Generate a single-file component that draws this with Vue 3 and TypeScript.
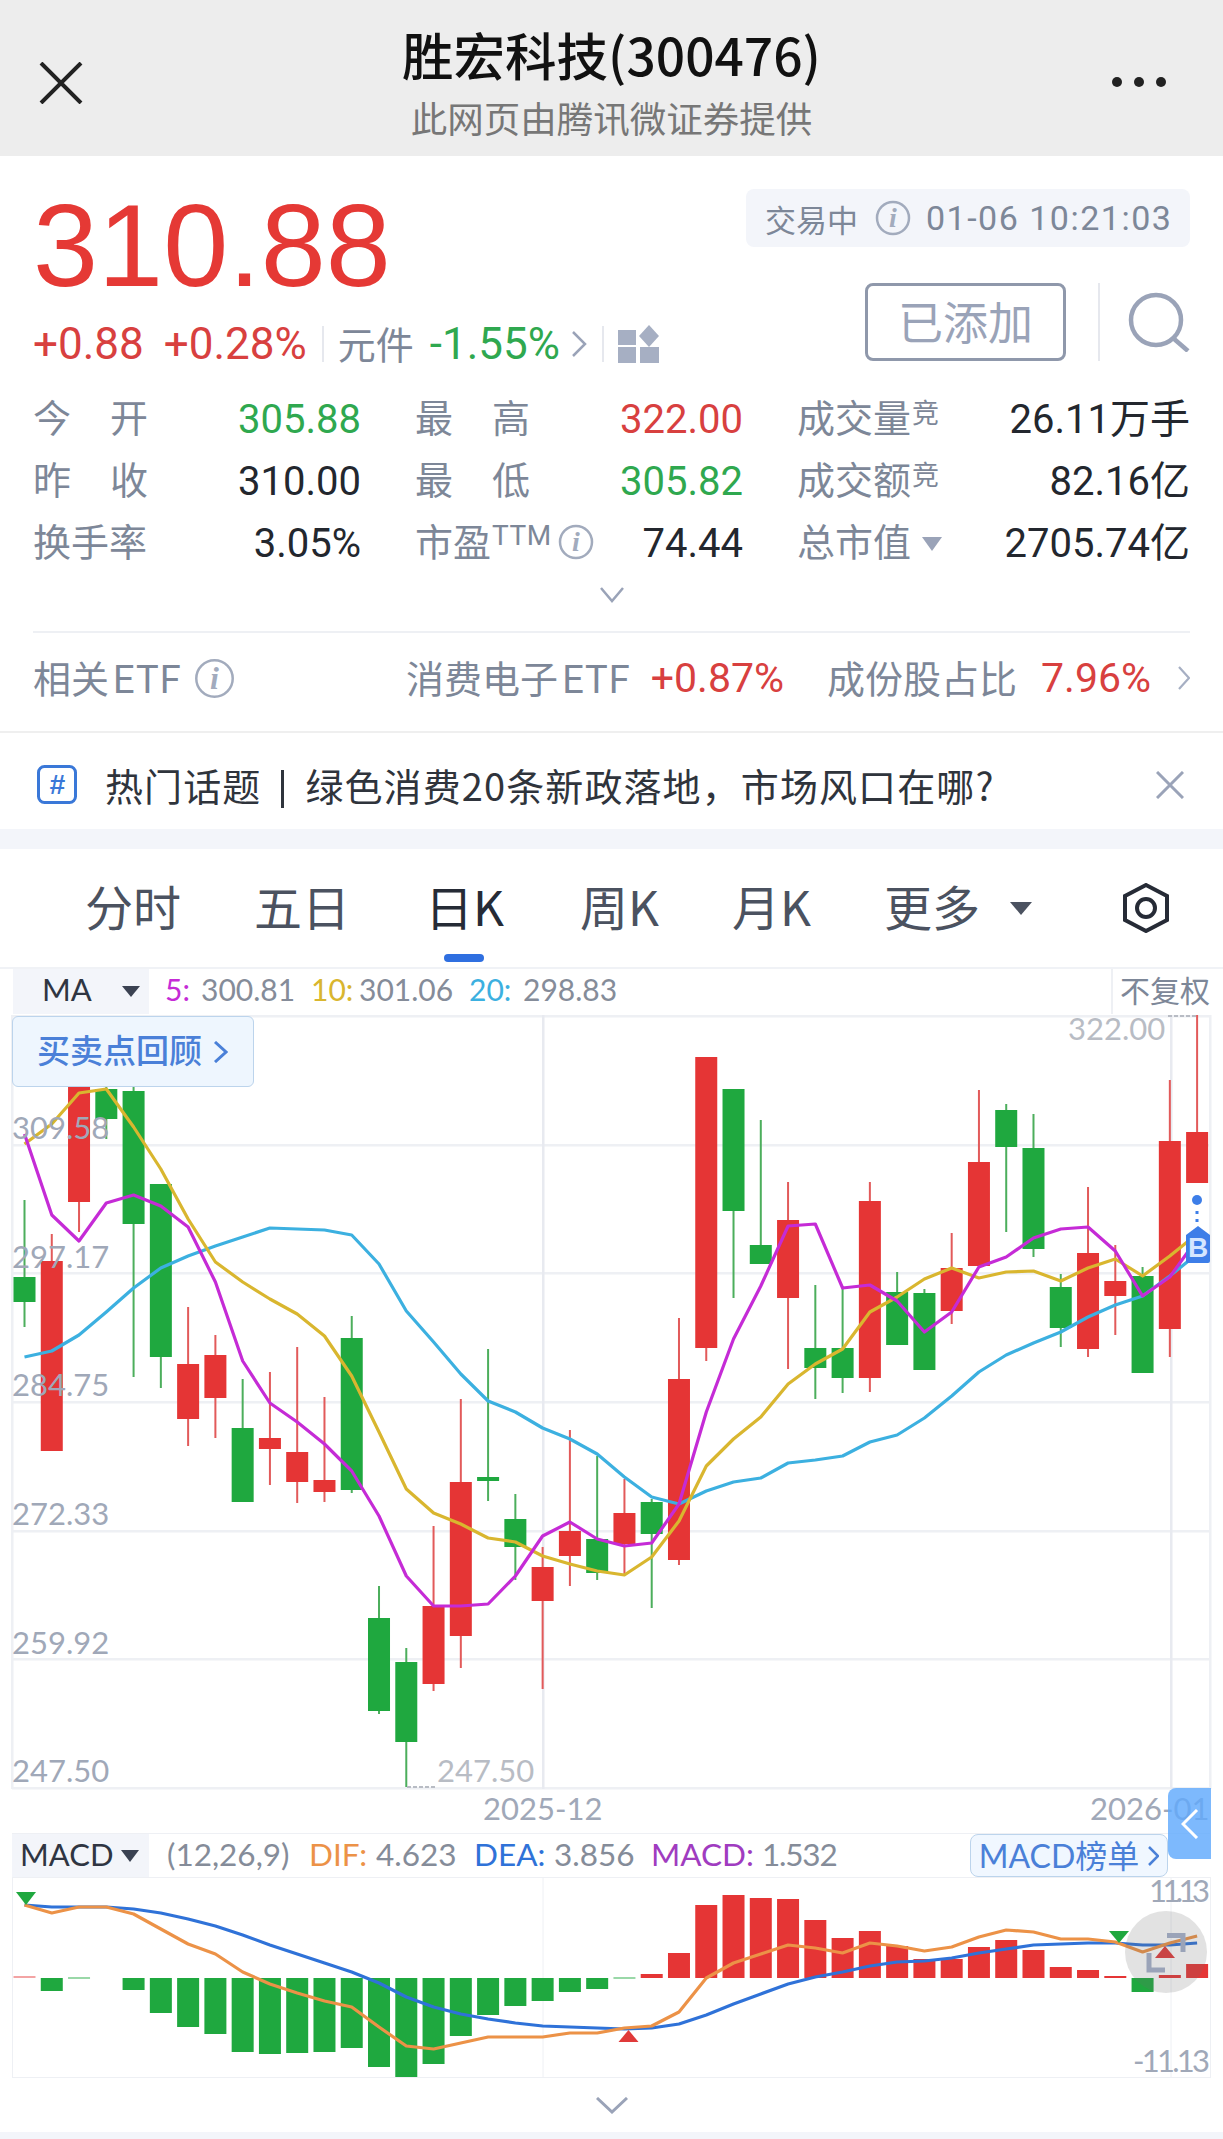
<script setup lang="ts">
import { computed } from 'vue'

// candles in page pixels: top, bottom, high, low, rising
type Candle = [number, number, number, number, boolean]

const candles: Candle[] = [
  [1278, 1303, 1201, 1328, false], [1262, 1452, 1235, 1452, true], [1087, 1203, 1087, 1233, true],
  [1090, 1120, 1088, 1140, false], [1092, 1225, 1088, 1378, false], [1185, 1358, 1185, 1389, false],
  [1365, 1420, 1308, 1447, true], [1356, 1399, 1336, 1439, true], [1429, 1503, 1380, 1503, false],
  [1439, 1450, 1373, 1486, true], [1453, 1483, 1348, 1504, true], [1481, 1493, 1398, 1503, true],
  [1339, 1491, 1317, 1494, false], [1619, 1712, 1587, 1715, false], [1663, 1743, 1649, 1788, false],
  [1607, 1685, 1527, 1692, true], [1483, 1637, 1400, 1669, true], [1478, 1482, 1350, 1502, false],
  [1520, 1548, 1495, 1581, false], [1568, 1602, 1548, 1690, true], [1532, 1557, 1431, 1587, true],
  [1540, 1574, 1457, 1581, false], [1514, 1545, 1480, 1575, true], [1503, 1535, 1500, 1609, false],
  [1380, 1561, 1319, 1566, true], [1058, 1349, 1058, 1362, true], [1090, 1212, 1090, 1299, false],
  [1246, 1265, 1121, 1265, false], [1221, 1299, 1183, 1370, true], [1349, 1369, 1286, 1400, false],
  [1349, 1379, 1290, 1394, false], [1202, 1379, 1183, 1393, true], [1293, 1346, 1273, 1346, false],
  [1294, 1371, 1290, 1371, false], [1269, 1312, 1234, 1325, true], [1163, 1267, 1091, 1267, true],
  [1111, 1148, 1105, 1233, false], [1149, 1250, 1115, 1258, false], [1288, 1329, 1275, 1348, false],
  [1254, 1350, 1188, 1358, true], [1282, 1297, 1246, 1336, true], [1277, 1374, 1268, 1374, false],
  [1142, 1330, 1081, 1358, true], [1133, 1184, 1016, 1184, true],
]

const ma5 = [1135, 1216, 1242, 1204, 1196, 1207, 1228, 1283, 1362, 1404, 1423, 1445, 1472, 1517, 1577, 1607, 1607, 1605, 1577, 1537, 1523, 1540, 1547, 1544, 1505, 1413, 1340, 1287, 1227, 1225, 1289, 1286, 1302, 1333, 1313, 1268, 1258, 1239, 1230, 1228, 1252, 1297, 1278, 1240]
const ma10 = [1145, 1125, 1094, 1090, 1128, 1170, 1220, 1263, 1283, 1300, 1315, 1337, 1377, 1433, 1490, 1514, 1525, 1539, 1543, 1557, 1565, 1572, 1576, 1558, 1522, 1467, 1440, 1418, 1385, 1365, 1350, 1313, 1298, 1280, 1269, 1279, 1273, 1272, 1282, 1269, 1260, 1277, 1257, 1235]
const ma20 = [1358, 1352, 1336, 1313, 1289, 1269, 1257, 1247, 1238, 1229, 1230, 1231, 1236, 1265, 1312, 1343, 1375, 1402, 1413, 1429, 1440, 1455, 1478, 1498, 1505, 1492, 1483, 1479, 1464, 1461, 1457, 1443, 1436, 1419, 1397, 1373, 1356, 1344, 1333, 1318, 1306, 1297, 1277, 1255]

// bar end in page pixels, zero line sits at 1978
const macdBars = [1977, 1991, 1979, 1978, 1990, 2013, 2027, 2034, 2052, 2054, 2053, 2052, 2048, 2067, 2077, 2064, 2036, 2015, 2006, 2001, 1992, 1989, 1979, 1974, 1953, 1905, 1895, 1898, 1899, 1920, 1938, 1931, 1946, 1959, 1959, 1947, 1940, 1950, 1967, 1970, 1977, 1992, 1975, 1964]
const dif = [1905, 1913, 1907, 1907, 1914, 1929, 1944, 1954, 1972, 1984, 1993, 2001, 2007, 2027, 2046, 2049, 2043, 2037, 2037, 2037, 2033, 2033, 2028, 2026, 2012, 1978, 1963, 1954, 1945, 1948, 1953, 1943, 1946, 1951, 1947, 1937, 1930, 1932, 1939, 1939, 1942, 1952, 1943, 1936]
const dea = [1905, 1907, 1907, 1907, 1909, 1913, 1919, 1926, 1935, 1945, 1954, 1963, 1972, 1983, 1997, 2007, 2014, 2019, 2023, 2026, 2027, 2028, 2029, 2028, 2024, 2015, 2004, 1994, 1984, 1977, 1972, 1966, 1962, 1961, 1958, 1953, 1949, 1945, 1944, 1943, 1943, 1945, 1945, 1943]

const gridLines = [1016, 1145, 1273, 1402, 1531, 1659, 1788]
const priceLabels = [
  { text: '309.58', y: 1140 }, { text: '297.17', y: 1269 }, { text: '284.75', y: 1397 },
  { text: '272.33', y: 1526 }, { text: '259.92', y: 1655 }, { text: '247.50', y: 1783 },
]

const xAt = (i: number) => 24.5 + 27.27 * i
const toPoints = (ys: number[]) => ys.map((y, i) => `${xAt(i).toFixed(1)},${y}`).join(' ')

const ma5Points = computed(() => toPoints(ma5))
const ma10Points = computed(() => toPoints(ma10))
const ma20Points = computed(() => toPoints(ma20))
const difPoints = computed(() => toPoints(dif))
const deaPoints = computed(() => toPoints(dea))

const bars = computed(() =>
  macdBars.map((end, i) => {
    const up = i === 0 || i === 40 || i === 42 || (i >= 23 && i !== 41)
    const thin = Math.abs(end - 1978) < 3
    return {
      x: xAt(i) - 11,
      y: Math.min(end, 1978) - (thin ? 1 : 0),
      h: thin ? 2 : Math.abs(end - 1978),
      up,
      faint: thin && (i === 0 || i === 2 || i === 22),
      hide: i === 3,
    }
  }),
)

const stats = [
  { label: ['今', '开'], value: '305.88', tone: 'down' },
  { label: ['最', '高'], value: '322.00', tone: 'up' },
  { label: ['成交量'], sup: '竞', value: '26.11万手', tone: '' },
  { label: ['昨', '收'], value: '310.00', tone: '' },
  { label: ['最', '低'], value: '305.82', tone: 'down' },
  { label: ['成交额'], sup: '竞', value: '82.16亿', tone: '' },
  { label: ['换手率'], value: '3.05%', tone: '' },
  { label: ['市盈'], sup: 'TTM', info: true, value: '74.44', tone: '' },
  { label: ['总市值'], caret: true, value: '2705.74亿', tone: '' },
]

const tabs = ['分时', '五日', '日K', '周K', '月K']
</script>

<template>
  <div class="page">
    <header class="nav">
      <svg class="nav-close" width="44" height="42" viewBox="0 0 44 42">
        <path d="M2 1 L42 41 M42 1 L2 41" fill="none" stroke="#222" stroke-width="4" />
      </svg>
      <div class="nav-title">
        <div class="name">胜宏科技(300476)</div>
        <div class="source">此网页由腾讯微证券提供</div>
      </div>
      <div class="nav-more"><i></i><i></i><i></i></div>
    </header>

    <section class="quote">
      <div class="quote-top">
        <div class="quote-left">
          <div class="price">310.88</div>
          <div class="change">
            <span class="up">+0.88</span>
            <span class="up pct">+0.28%</span>
            <span class="sep"></span>
            <span class="sector">元件</span>
            <span class="down sector-pct">-1.55%</span>
            <svg width="16" height="28" viewBox="0 0 16 28" class="chev">
              <path d="M2 2 L14 14 L2 26" fill="none" stroke="#9aa3b8" stroke-width="2.5" />
            </svg>
            <span class="sep"></span>
            <svg width="42" height="38" viewBox="0 0 42 38" class="stack">
              <rect x="0" y="5" width="18" height="15" fill="#a6afc3" />
              <path d="M31 0 L41 11 L31 22 L21 11 Z" fill="#a6afc3" />
              <rect x="0" y="22" width="18" height="16" fill="#a6afc3" />
              <rect x="22" y="22" width="19" height="16" fill="#a6afc3" />
            </svg>
          </div>
        </div>
        <div class="quote-right">
          <div class="status">
            <span>交易中</span>
            <svg class="info" width="36" height="36" viewBox="0 0 36 36">
              <circle cx="18" cy="18" r="16" fill="none" stroke="#a2abbd" stroke-width="2.5" />
              <text x="18" y="27" text-anchor="middle" class="info-i">i</text>
            </svg>
            <span class="time">01-06 10:21:03</span>
          </div>
          <div class="actions">
            <div class="added">已添加</div>
            <span class="act-sep"></span>
            <svg width="62" height="60" viewBox="0 0 62 60">
              <circle cx="28" cy="28" r="25" fill="none" stroke="#9aa3b8" stroke-width="4.5" />
              <path d="M45 46 L60 59" fill="none" stroke="#9aa3b8" stroke-width="4.5" />
            </svg>
          </div>
        </div>
      </div>

      <div class="stats">
        <div v-for="s in stats" :key="s.value" class="stat">
          <div class="stat-label" :class="{ spread: s.label.length > 1 }">
            <span v-for="l in s.label" :key="l">{{ l }}</span>
            <sup v-if="s.sup" :class="{ ttm: s.sup === 'TTM' }">{{ s.sup }}</sup>
            <svg v-if="s.info" class="info small" width="36" height="36" viewBox="0 0 36 36">
              <circle cx="18" cy="18" r="16" fill="none" stroke="#a2abbd" stroke-width="2.5" />
              <text x="18" y="27" text-anchor="middle" class="info-i">i</text>
            </svg>
            <svg v-if="s.caret" class="caret" width="20" height="14" viewBox="0 0 20 14">
              <path d="M0 0 H20 L10 14 Z" fill="#9aa3b8" />
            </svg>
          </div>
          <div class="stat-value" :class="s.tone">{{ s.value }}</div>
        </div>
      </div>

      <div class="expand">
        <svg width="24" height="16" viewBox="0 0 24 16">
          <path d="M1 1 L12 14 L23 1" fill="none" stroke="#9aa3b8" stroke-width="2.5" />
        </svg>
      </div>
    </section>

    <section class="etf">
      <div class="etf-inner">
        <span class="etf-cjk">相关<span class="latin">ETF</span></span>
        <svg class="info etf-info" width="41" height="41" viewBox="0 0 36 36">
          <circle cx="18" cy="18" r="16" fill="none" stroke="#a2abbd" stroke-width="2.2" />
          <text x="18" y="27" text-anchor="middle" class="info-i">i</text>
        </svg>
        <span class="etf-cjk etf-name">消费电子<span class="latin">ETF</span></span>
        <span class="up etf-pct">+0.87%</span>
        <span class="etf-cjk etf-share">成份股占比</span>
        <span class="up etf-rate">7.96%</span>
        <svg width="12" height="24" viewBox="0 0 12 24" class="etf-chev">
          <path d="M1 1 L11 12 L1 23" fill="none" stroke="#a6afc3" stroke-width="2.2" />
        </svg>
      </div>
    </section>

    <section class="topic">
      <svg width="40" height="39" viewBox="0 0 40 39">
        <rect x="1.5" y="1.5" width="37" height="36" rx="6" fill="#fff" stroke="#3a78d8" stroke-width="3" />
        <text x="20" y="29" text-anchor="middle" class="hash">#</text>
      </svg>
      <div class="topic-text">热门话题<i class="bar"></i>绿色消费20条新政落地，市场风口在哪?</div>
      <svg class="topic-close" width="28" height="28" viewBox="0 0 28 28">
        <path d="M1 1 L27 27 M27 1 L1 27" fill="none" stroke="#9aa3b8" stroke-width="3" />
      </svg>
    </section>

    <div class="band"></div>

    <nav class="tabs">
      <div v-for="t in tabs" :key="t" class="tab" :class="{ active: t === '日K' }">{{ t }}</div>
      <div class="tab more">更多<i></i></div>
      <svg class="gear" width="46" height="50" viewBox="0 0 46 50">
        <path d="M23 2 L44 13 V37 L23 48 L2 37 V13 Z" fill="none" stroke="#262b36" stroke-width="4" />
        <circle cx="23" cy="25" r="9" fill="none" stroke="#262b36" stroke-width="4" />
      </svg>
    </nav>

    <div class="chart-head">
      <div class="ma-box">MA<i></i></div>
      <div class="ma-vals">
        <span class="c5">5:</span><span class="val">300.81</span>
        <span class="c10">10:</span><span class="val">301.06</span>
        <span class="c20">20:</span><span class="val">298.83</span>
      </div>
      <div class="adjust">不复权</div>
    </div>

    <div class="chart-wrap">
      <svg class="kline" width="1223" height="819" viewBox="0 1015 1223 819">
        <rect v-for="y in gridLines" :key="y" x="12" :y="y" width="1198" height="2.5" fill="#eef0f4" />
        <rect x="11" y="1016" width="2.5" height="774" fill="#eef0f4" />
        <rect x="1209" y="1016" width="2.5" height="774" fill="#eef0f4" />
        <rect x="542" y="1016" width="2.5" height="774" fill="#e8eaf0" />
        <rect x="1170" y="1016" width="2.5" height="774" fill="#e8eaf0" />

        <g v-for="(c, i) in candles" :key="i">
          <rect :x="xAt(i) - 1" :y="c[2]" width="2" :height="c[3] - c[2]" :fill="c[4] ? '#e25a5a' : '#4cae5c'" />
          <rect :x="xAt(i) - 11" :y="c[0]" width="22" :height="c[1] - c[0]" :fill="c[4] ? '#e53535' : '#1fa83f'" />
        </g>

        <polyline :points="ma20Points" class="line" stroke="#3cb0e0" />
        <polyline :points="ma10Points" class="line" stroke="#d9b62f" />
        <polyline :points="ma5Points" class="line" stroke="#c52bd6" />

        <text v-for="p in priceLabels" :key="p.y" x="12" :y="p.y" class="axis">{{ p.text }}</text>
        <text x="1068" y="1041" class="axis soft">322.00</text>
        <path d="M1168 1017 H1197" stroke="#b8bcc4" stroke-width="2" stroke-dasharray="4 2" />
        <text x="437" y="1783" class="axis soft">247.50</text>
        <path d="M407 1788 H437" stroke="#b8bcc4" stroke-width="2" stroke-dasharray="4 2" />
        <text x="483" y="1821" class="axis">2025-12</text>
        <text x="1090" y="1821" class="axis">2026-01</text>

        <circle cx="1197" cy="1201" r="5" fill="#3d7ee8" />
        <rect x="1195.5" y="1212" width="3" height="3" fill="#3d7ee8" />
        <rect x="1195.5" y="1220" width="3" height="3" fill="#3d7ee8" />
        <path d="M1198 1227 L1210 1236 V1262 Q1210 1264 1208 1264 H1188 Q1186 1264 1186 1262 V1236 Z" fill="#3d7ee8" />
        <text x="1198" y="1258" text-anchor="middle" class="mark-b">B</text>
      </svg>

      <div class="review">买卖点回顾<svg width="15" height="22" viewBox="0 0 15 22">
          <path d="M2 1 L13 11 L2 21" fill="none" stroke="#4a80d8" stroke-width="3" />
        </svg></div>
      <div class="side-tab">
        <svg width="18" height="30" viewBox="0 0 18 30">
          <path d="M16 1 L2 15 L16 29" fill="none" stroke="#fff" stroke-width="3" />
        </svg>
      </div>
    </div>

    <div class="macd-head">
      <div class="ma-box macd-box">MACD<i></i></div>
      <div class="ma-vals macd-vals">
        <span class="val">(12,26,9)</span>
        <span class="cdif">DIF:</span><span class="val">4.623</span>
        <span class="cdea">DEA:</span><span class="val">3.856</span>
        <span class="cmacd">MACD:</span><span class="val narrow">1.532</span>
      </div>
      <div class="macd-rank">MACD榜单<svg width="11" height="20" viewBox="0 0 11 20">
          <path d="M1 1 L10 10 L1 19" fill="none" stroke="#4a80d8" stroke-width="2.5" />
        </svg></div>
    </div>

    <svg class="macd" width="1223" height="201" viewBox="0 1877 1223 201">
      <path d="M12 1877.5 H1210 M12 2077.5 H1210 M12.5 1877 V2078 M1210.5 1877 V2078 M543 1877 V2078 M1171 1877 V2078" stroke="#eef0f4" stroke-width="1" fill="none" />
      <template v-for="(b, i) in bars" :key="i">
        <rect v-if="!b.hide" :x="b.x" :y="b.y" width="22" :height="b.h" :fill="b.up ? '#e53535' : '#1fa83f'" :opacity="b.faint ? 0.45 : 1" />
      </template>
      <polyline :points="deaPoints" class="line" stroke="#2f72d8" />
      <polyline :points="difPoints" class="line" stroke="#ec9247" />
      <path d="M16 1892 H36 L26 1905 Z" fill="#1fa83f" />
      <path d="M618.5 2042 H638.5 L628.5 2030 Z" fill="#e03a3a" />
      <path d="M1109 1931 H1129 L1119 1943 Z" fill="#1fa83f" />
      <path d="M1155 1958 H1175 L1165 1946 Z" fill="#e03a3a" />
      <circle cx="1166" cy="1952" r="41" fill="rgba(110,110,110,0.2)" />
      <path d="M1167 1935.5 H1183 V1952 M1165 1970 H1149 V1953" fill="none" stroke="#9aa3b8" stroke-width="5" />
      <text x="1149" y="1902" textLength="61" class="axis">11.13</text>
      <text x="1133" y="2072" textLength="77" class="axis">-11.13</text>
    </svg>

    <div class="foot">
      <svg width="32" height="17" viewBox="0 0 32 17">
        <path d="M1 1 L16 15 L31 1" fill="none" stroke="#9aa3b8" stroke-width="3" />
      </svg>
    </div>
    <div class="band last"></div>
  </div>
</template>

<style scoped>
.page {
  position: relative;
  width: 1223px;
  height: 2139px;
  overflow: hidden;
  background: #fff;
  font-family: Roboto, "Noto Sans CJK SC", sans-serif;
  color: #23272e;
}

/* nav */
.nav {
  position: relative;
  height: 156px;
  background: #ededed;
  display: flex;
  align-items: center;
  justify-content: center;
}
.nav-close {
  position: absolute;
  left: 39px;
  top: 62px;
}
.nav-title { text-align: center; margin-top: 9px; }
.name {
  font-size: 51.5px;
  line-height: 58px;
  color: #111;
  font-family: "Noto Sans CJK SC", sans-serif;
  font-weight: 500;
}
.source {
  margin-top: 12px;
  font-size: 36.5px;
  line-height: 46px;
  color: #777;
  font-family: "Noto Sans CJK SC", sans-serif;
}
.nav-more {
  position: absolute;
  right: 57px;
  top: 77px;
  display: flex;
  gap: 12px;
}
.nav-more i {
  width: 10px;
  height: 10px;
  border-radius: 50%;
  background: #222;
}

/* quote */
.quote { padding: 33px 33px 0; }
.quote-top { display: flex; justify-content: space-between; }
.quote-left { width: 680px; height: 174px; display: flex; flex-direction: column; }
.price {
  font-family: "Liberation Sans", sans-serif;
  font-size: 117px;
  line-height: 114px;
  color: #e53935;
}
.change {
  margin-top: auto;
  height: 38px;
  display: flex;
  align-items: center;
  font-size: 44px;
  white-space: nowrap;
}
.up { color: #d8403f; }
.down { color: #2fa84f; }
.pct { margin-left: 20px; }
.sep { width: 2px; height: 36px; background: #e6e8ee; margin: 0 14px 0 15px; }
.sector {
  color: #7d8798;
  font-size: 38px;
  margin-top: -4px;
  font-family: "Noto Sans CJK SC", sans-serif;
}
.sector-pct { margin-left: 16px; }
.chev { margin-left: 11px; }
.quote-right { width: 445px; height: 172px; display: flex; flex-direction: column; align-items: flex-end; }
.status {
  width: 444px;
  height: 58px;
  flex: none;
  box-sizing: border-box;
  background: #f3f5fa;
  border-radius: 8px;
  display: flex;
  align-items: center;
  padding-left: 19px;
  font-size: 31px;
  color: #7d8798;
  font-family: "Noto Sans CJK SC", sans-serif;
}
.status .info { margin-left: 17px; }
.time {
  margin-left: 15px;
  font-family: Roboto, sans-serif;
  font-size: 34px;
  letter-spacing: 1.5px;
  white-space: nowrap;
}
.actions { margin-top: 36px; display: flex; align-items: center; height: 78px; }
.added {
  width: 201px;
  height: 78px;
  box-sizing: border-box;
  border: 3px solid #8f98ab;
  border-radius: 8px;
  text-align: center;
  line-height: 70px;
  font-size: 45px;
  color: #9aa3b8;
  font-family: "Noto Sans CJK SC", sans-serif;
}
.act-sep { width: 2px; height: 78px; background: #e6e8ee; margin: 0 28px 0 32px; }
.info-i {
  font-family: "Liberation Serif", serif;
  font-style: italic;
  font-size: 28px;
  font-weight: 700;
  fill: #a2abbd;
}

/* stats */
.stats {
  margin-top: 24px;
  display: grid;
  grid-template-columns: 328px 328px 393px;
  column-gap: 54px;
  grid-auto-rows: 62px;
}
.stat {
  display: flex;
  align-items: center;
  justify-content: space-between;
  white-space: nowrap;
}
.stat-label {
  display: flex;
  align-items: center;
  margin-top: -6px;
  font-size: 38px;
  color: #7d8798;
  font-family: "Noto Sans CJK SC", sans-serif;
}
.stat-label.spread { width: 115px; justify-content: space-between; }
.stat-label sup {
  font-size: 27px;
  line-height: 1;
  align-self: flex-start;
  margin-top: 10px;
  margin-left: 1px;
}
.stat-label sup.ttm { font-family: Roboto, sans-serif; font-size: 28px; letter-spacing: 0.6px; }
.stat-label .small { margin-left: 6px; margin-top: 6px; }
.stat-label .caret { margin-left: 11px; margin-top: 10px; }
.stat-value {
  margin-top: 4px;
  font-size: 40px;
  line-height: 46px;
  font-family: Roboto, "Noto Sans CJK SC", sans-serif;
}

.expand {
  margin-top: 14px;
  height: 44px;
  display: flex;
  justify-content: center;
}

/* etf */
.etf { padding: 0 33px; }
.etf-inner {
  height: 100px;
  box-sizing: border-box;
  border-top: 2px solid #eef0f4;
  padding-bottom: 8px;
  display: flex;
  align-items: center;
  font-size: 38px;
  color: #7d8798;
  font-family: "Noto Sans CJK SC", sans-serif;
  white-space: nowrap;
}
.etf-cjk { margin-bottom: 4px; }
.latin { font-family: Roboto, sans-serif; margin-left: 4px; letter-spacing: 1px; }
.etf-info { margin-left: 12px; }
.etf-name { margin-left: auto; }
.etf-pct { margin-left: 20px; font-family: Roboto, sans-serif; font-size: 41px; }
.etf-share { margin-left: 43px; }
.etf-rate { margin-left: 24px; font-family: Roboto, sans-serif; font-size: 41px; }
.etf-chev { margin-left: 27px; }

/* topic */
.topic {
  height: 98px;
  box-sizing: border-box;
  border-top: 2px solid #efefef;
  padding: 7px 39px 0 37px;
  display: flex;
  align-items: center;
}
.hash {
  font-family: "Liberation Sans", sans-serif;
  font-size: 28px;
  font-style: italic;
  font-weight: 700;
  fill: #3a78d8;
}
.topic-text {
  margin-left: 28px;
  font-size: 38px;
  letter-spacing: 1.1px;
  color: #2f343c;
  font-family: "Noto Sans CJK SC", sans-serif;
  white-space: nowrap;
}
.bar {
  display: inline-block;
  width: 3px;
  height: 38px;
  vertical-align: -7px;
  background: #2f343c;
  margin: 0 21px 0 20px;
}
.topic-close { margin-left: auto; }

.band { height: 20px; background: #f3f5fa; }
.band.last { height: 7px; }

/* tabs */
.tabs {
  position: relative;
  height: 118px;
  box-sizing: border-box;
  padding: 0 0 6px 85px;
  display: flex;
  align-items: center;
  gap: 73px;
  font-size: 48px;
  color: #4b5260;
  font-family: "Noto Sans CJK SC", sans-serif;
}
.tab { white-space: nowrap; position: relative; }
.tab.active { color: #262b36; margin: 0 3px 0 2px; }
.tab.active::after {
  content: "";
  position: absolute;
  left: 19px;
  bottom: -22px;
  width: 40px;
  height: 8px;
  border-radius: 4px;
  background: #2f6fe0;
}
.tab.more { display: flex; align-items: center; }
.tab.more i {
  margin-left: 30px;
  margin-top: 6px;
  border-left: 11px solid transparent;
  border-right: 11px solid transparent;
  border-top: 13px solid #4b5260;
}
.gear { position: absolute; left: 1123px; top: 34px; }

/* chart */
.chart-head {
  height: 47px;
  border-top: 2px solid #f0f2f6;
  box-sizing: border-box;
  display: flex;
  align-items: stretch;
  font-family: Lato, "Noto Sans CJK SC", sans-serif;
  font-size: 30px;
}
.ma-box {
  margin-left: 13px;
  width: 136px;
  background: #f3f5fa;
  display: flex;
  align-items: center;
  padding: 0 0 5px 29px;
  box-sizing: border-box;
  color: #2f3542;
  font-size: 31px;
}
.ma-box i {
  margin-left: 30px;
  margin-top: 4px;
  border-left: 9px solid transparent;
  border-right: 9px solid transparent;
  border-top: 11px solid #3b4252;
}
.ma-vals { display: flex; align-items: center; margin-left: 16px; padding-bottom: 5px; white-space: nowrap; }
.val { color: #858c99; }
.chart-head .ma-vals span:nth-child(1) { width: 36px; }
.chart-head .ma-vals span:nth-child(2) { width: 110px; }
.chart-head .ma-vals span:nth-child(3) { width: 48px; }
.chart-head .ma-vals span:nth-child(4) { width: 110px; }
.chart-head .ma-vals span:nth-child(5) { width: 54px; }
.c5 { color: #c52bd6; }
.c10 { color: #d9b62f; }
.c20 { color: #3cb0e0; }
.adjust {
  margin-left: auto;
  margin-right: 13px;
  padding: 0 0 5px 7px;
  border-left: 2px solid #eef0f4;
  display: flex;
  align-items: center;
  font-size: 30px;
  color: #7d8798;
  font-family: "Noto Sans CJK SC", sans-serif;
}
.chart-wrap { position: relative; height: 819px; }
.kline { display: block; overflow: visible; }
.line { fill: none; stroke-width: 3.2; stroke-linejoin: round; }
.axis {
  font-family: Lato, sans-serif;
  font-size: 31px;
  fill: #a0a8b8;
}
.axis.soft { fill: #b8bcc4; }
.mark-b {
  font-family: "Liberation Sans", sans-serif;
  font-size: 28px;
  font-weight: 700;
  fill: #d4e6ff;
}
.review {
  position: absolute;
  left: 12px;
  top: 2px;
  width: 242px;
  height: 71px;
  box-sizing: border-box;
  background: #eef6fe;
  border: 1.5px solid #bcd4ec;
  border-radius: 6px;
  display: flex;
  align-items: center;
  padding: 0 0 6px 24px;
  gap: 11px;
  font-size: 33px;
  font-weight: 500;
  color: #4a80d8;
  font-family: "Noto Sans CJK SC", sans-serif;
}
.review svg { margin-top: 6px; }
.side-tab {
  position: absolute;
  left: 1168px;
  top: 774px;
  width: 43px;
  height: 71px;
  border-radius: 8px 0 0 8px;
  background: rgba(96, 170, 252, 0.82);
  display: flex;
  align-items: center;
  justify-content: center;
  z-index: 2;
}

/* macd */
.macd-head {
  height: 43px;
  display: flex;
  align-items: stretch;
  font-family: Lato, "Noto Sans CJK SC", sans-serif;
  font-size: 31.5px;
  border-top: 1px solid #eef0f4;
  margin-left: 12px;
  margin-right: 13px;
  box-sizing: content-box;
}
.macd-box { margin-left: 0; width: 137px; padding: 0 0 4px 8px; font-size: 31px; }
.macd-box i { margin-left: 8px; border-left-width: 9px; border-right-width: 9px; border-top-width: 12px; }
.macd-vals { margin-left: 18px; padding-bottom: 4px; }
.macd-vals span:nth-child(1) { width: 142px; }
.macd-vals span:nth-child(2) { width: 67px; }
.macd-vals span:nth-child(3) { width: 98px; }
.macd-vals span:nth-child(4) { width: 80px; }
.macd-vals span:nth-child(5) { width: 97px; }
.macd-vals span:nth-child(6) { width: 111px; }
.narrow { letter-spacing: -1.2px; }
.cdif { color: #ec9247; }
.cdea { color: #2f72d8; }
.cmacd { color: #a03cc0; }
.macd-rank {
  margin-left: auto;
  margin-right: 42px;
  width: 198px;
  box-sizing: border-box;
  background: #f0f7ff;
  border: 1.5px solid #bcd4ec;
  border-radius: 8px;
  display: flex;
  align-items: center;
  justify-content: center;
  gap: 9px;
  padding-bottom: 4px;
  color: #4a80d8;
  font-size: 32px;
}
.macd-rank svg { margin-top: 4px; }
.macd { display: block; overflow: visible; }
.foot {
  height: 54px;
  box-sizing: border-box;
  padding-top: 19px;
  display: flex;
  justify-content: center;
}
</style>

<style>
body { margin: 0; background: #fff; }
</style>
